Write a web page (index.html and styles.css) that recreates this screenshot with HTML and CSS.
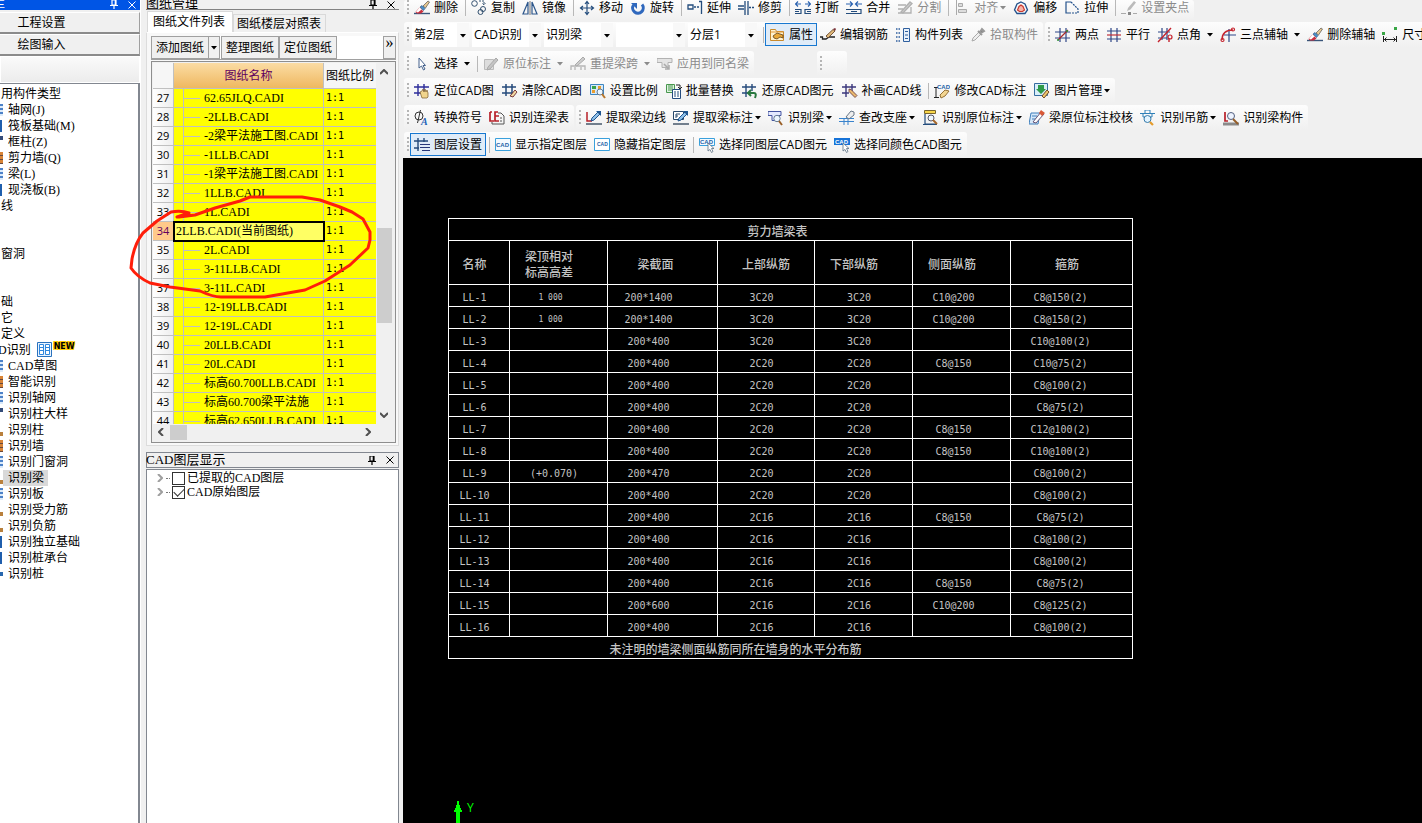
FILE: index.html
```html
<!DOCTYPE html>
<html lang="zh-CN">
<head>
<meta charset="utf-8">
<title>图纸管理</title>
<link rel="stylesheet" href="styles.css">
</head>
<body>
<svg class="defs" aria-hidden="true">
<defs>
<symbol id="arrow" viewBox="0 0 6 4"><path d="M0 0h6L3 3.5z" fill="currentColor"/></symbol>
<symbol id="brush" viewBox="0 0 16 16"><path d="M0 13.5h16" stroke="#39557a" stroke-width="1.4"/><path d="M9 6l5-5 1.5 1-4 6z" fill="#e8c890" stroke="#555" stroke-width=".7"/><path d="M6 7l2-1.500 3 3-1.500 2z" fill="#4a90c8" stroke="#274a78" stroke-width=".6"/><path d="M5.500 7.500l4 4-2.500 2H3L1.500 12z" fill="#c9303e"/><path d="M5.500 7.500l2 2-3.500 3-2-.8z" fill="#fff"/></symbol>
<symbol id="copy" viewBox="0 0 16 16" fill="none" stroke="#33506f"><circle cx="3.500" cy="3.500" r="2.800"/><circle cx="12" cy="9" r="2.500"/><circle cx="9.500" cy="12" r="2.500"/><path d="M8 1h5v4m-1.500-1.500L13 5l1.500-1.500" stroke-dasharray="2 1"/></symbol>
<symbol id="mirror" viewBox="0 0 16 16" fill="none" stroke="#2d578c" stroke-width="1.200"><path d="M6 2v12H1zM10 2v12h5z"/><path d="M8 1v14" stroke="#555" stroke-width=".8"/></symbol>
<symbol id="move" viewBox="0 0 16 16" fill="none" stroke="#244d7d" stroke-width="1.200"><path d="M8 2v12M2 8h12M6 4l2-2.500L10 4M6 12l2 2.500L10 12M4 6L1.500 8 4 10M12 6l2.500 2L12 10"/></symbol>
<symbol id="rotate" viewBox="0 0 16 16"><path d="M12 4.500a5.300 5.300 0 1 1-8.500.5" fill="none" stroke="#2f68bd" stroke-width="3"/><path d="M1 3h6v6z" fill="#2f68bd"/></symbol>
<symbol id="extend" viewBox="0 0 16 16" fill="none" stroke="#244d7d" stroke-width="1.300"><path d="M1 5h5v4H1zM14.500 1v13M12 1.500h3" /><path d="M7 7h6" stroke-dasharray="2 1"/></symbol>
<symbol id="trim" viewBox="0 0 16 16" fill="none" stroke="#244d7d" stroke-width="1.300"><path d="M7 1v14M10 1v14M0 6h6M0 9h6"/><path d="M11 7.500h5" stroke-dasharray="2 1"/></symbol>
<symbol id="break" viewBox="0 0 16 16" fill="none" stroke="#244d7d" stroke-width="1.200"><path d="M0 4h6M3 1.500L.5 4 3 6.500M10 4h6M13 1.500L15.500 4 13 6.500" stroke="#2b62b0"/><path d="M0 9.500h6v4H0M16 9.500h-6v4h6M0 11.500h4M12 11.500h4"/></symbol>
<symbol id="join" viewBox="0 0 16 16" fill="none" stroke="#244d7d" stroke-width="1.200"><path d="M0 4h6M4 1.500L6.500 4 4 6.500M10 4h6M12 1.500L9.500 4 12 6.500" stroke="#2b62b0"/><path d="M0 9.500h15v4H0M5 11.500h6"/></symbol>
<symbol id="split" viewBox="0 0 16 16" fill="none" stroke="#b0b0b0" stroke-width="1.300"><path d="M1 5h8M1 13h13V7M1 9h5"/><path d="M4 12L13 2l2 1.500L6 13z" fill="#ccc"/></symbol>
<symbol id="align" viewBox="0 0 16 16" fill="#ddd" stroke="#aaa"><path d="M2.500 0v15M4.500 3.500h4v3h-4zM4.500 9.500h8v3h-8z"/></symbol>
<symbol id="offset" viewBox="0 0 16 16" fill="none"><path d="M8 2l4 2 2.500 6L12 13.500H4L1.500 10 4 4z" stroke="#24528c" stroke-width="1.300"/><path d="M8 5l2 1.500 1.500 3.500-2 1.500h-3l-2-1.500L6 6.500z" fill="#f6b3a8" stroke="#cc3a30" stroke-width="1.200"/></symbol>
<symbol id="stretch" viewBox="0 0 16 16" fill="none" stroke="#24528c" stroke-width="1.200"><path d="M7 2H2v11h5"/><path d="M7 2l4 4M8 13h6V9l-3-3" stroke-dasharray="2 1"/></symbol>
<symbol id="grippt" viewBox="0 0 16 16"><path d="M0 13.500h5M12 13.500h4" stroke="#aaa"/><path d="M7 8l6-7 2 1.500-5.500 7L6 11z" fill="#bbb"/><path d="M7 12h3v3H7z" fill="#888"/></symbol>
<symbol id="props" viewBox="0 0 16 16"><path d="M1.500 2.500h5l1 2h7v9h-13z" fill="#fff3cf" stroke="#c98a2c"/><path d="M2 5h12" stroke="#e1993a"/><path d="M4 9l4-3 6 2v3l-3-1-3 2-3-1z" fill="#e9a938" stroke="#604015" stroke-width=".8"/></symbol>
<symbol id="rebar" viewBox="0 0 16 16"><path d="M0 10h2.500v2H6l3-2h6" fill="none" stroke="#222" stroke-width="1.300"/><path d="M6 9l7-6.500L15 4 8 11z" fill="#e1b97a" stroke="#5a3a20" stroke-width=".8"/><path d="M13 2l2 2 1-2-1-1z" fill="#7a3038"/></symbol>
<symbol id="list" viewBox="0 0 16 16"><path d="M1 2h5M1 6h5M1 10h5M1 14h5" stroke="#2f5f9e" stroke-width="1.500" stroke-dasharray="1.500 1"/><path d="M8.500 1.500h6v13h-6z" fill="#e9f1fa" stroke="#2f5f9e"/><path d="M10 4.500h3M10 8h3M10 11.500h3" stroke="#2f5f9e"/></symbol>
<symbol id="pick" viewBox="0 0 16 16"><path d="M2 14l1-3 6-6 2 2-6 6z" fill="#eee" stroke="#aaa"/><path d="M8 4l4 4M10 5l2-3 2 2-3 2z" stroke="#999" stroke-width="2"/></symbol>
<symbol id="twopt" viewBox="0 0 16 16" fill="none" stroke="#2f4787" stroke-width="1.200"><path d="M5 1v14M11 1v14M0 5h15M0 11h15"/><path d="M3 13L13 3" stroke="#a52a2a"/><circle cx="3" cy="13" r="1" fill="#2c9437" stroke="none"/><circle cx="12" cy="4" r="1" fill="#2c9437" stroke="none"/></symbol>
<symbol id="par" viewBox="0 0 16 16" fill="none" stroke="#2f4787" stroke-width="1.200"><path d="M5 1v14M11 1v14M1 4h14M1 12h14"/><path d="M1 8h14" stroke="#c22e38"/></symbol>
<symbol id="ptang" viewBox="0 0 16 16" fill="none" stroke="#2f4787" stroke-width="1.200"><path d="M5 1v12M10 1v12M1 5h12M1 11h9"/><path d="M1 15L14 1M12 15v-4" stroke="#c5222d" stroke-width="1.400"/><circle cx="13" cy="10" r="2" stroke="#c5222d"/></symbol>
<symbol id="threept" viewBox="0 0 16 16" fill="none" stroke="#2f4787" stroke-width="1.200"><path d="M9 2v13M4 8h12"/><path d="M2 13C2 6 6 3 13 3" stroke="#c5222d" stroke-width="1.500"/><circle cx="2.500" cy="13" r="1.500" stroke="#c5222d"/><circle cx="13" cy="2.500" r="1.500" stroke="#c5222d"/></symbol>
<symbol id="dim" viewBox="0 0 16 16" fill="none" stroke="#222"><path d="M1.500 9v6M14.500 9v6M2 12.500h12M4.500 10.500l-2 2 2 2M11.500 10.500l2 2-2 2"/><path d="M0 5h3v3H0zM12 0h3v3h-3z" fill="#39a645" stroke="none"/></symbol>
<symbol id="ptr" viewBox="0 0 16 16"><path d="M5 2v10l2.500-2 2 4 1.500-1-2-3.500h2.500z" fill="#fff" stroke="#44618c"/></symbol>
<symbol id="graynote" viewBox="0 0 16 16"><path d="M1.500 3.500h9v10h-9z" fill="#ddd" stroke="#bbb"/><path d="M5 11l8-9 2 2-8 9-3 1z" fill="#c4c4c4" stroke="#aaa"/></symbol>
<symbol id="grayspan" viewBox="0 0 16 16"><path d="M1 14v-4h14v4M5 14v-3M11 14v-3" fill="none" stroke="#b5b5b5" stroke-width="1.300"/><path d="M5 9l8-8 2 2-8 7z" fill="#ccc" stroke="#aaa"/></symbol>
<symbol id="grayapply" viewBox="0 0 16 16"><path d="M0 2.500h15v4H11v5H5v-5H0z" fill="#e4e4e4" stroke="#b2b2b2"/><path d="M7 8l5 5M12 9v4H8" stroke="#aaa" stroke-width="1.500" fill="none"/></symbol>
<symbol id="cadloc" viewBox="0 0 16 16" fill="none" stroke="#2d2d9a" stroke-width="1.400"><path d="M4 1v12M10 1v8M0 4h15M0 10h7"/><path d="M6 9l2-1 1-2 1 3 1-3 1 3 1-2 1 3v4l-1 1H8z" fill="#f0d48c" stroke="#7a5a28" stroke-width=".7"/></symbol>
<symbol id="cadclr" viewBox="0 0 16 16" fill="none" stroke="#254a7b" stroke-width="1.500"><path d="M4 1v12M10 1v12M0 4h14M0 10h12"/><path d="M8 13l5-6 2 2-4 5z" fill="#f1d9a1" stroke="#6b2830" stroke-width=".9"/></symbol>
<symbol id="scale" viewBox="0 0 16 16"><path d="M.5 1.500h13v10H.5z" fill="#d5eafa" stroke="#3d85c0"/><path d="M2 3h4v3H2zM8 7h4v3H8z" fill="#3aa34a"/><path d="M8 3h3v3H8zM2 7h3v3H2z" fill="#ec9d2d"/><circle cx="10" cy="9" r="3" fill="#edf7ff" stroke="#667b92"/><path d="M12 11l3 4" stroke="#b8772c" stroke-width="2"/></symbol>
<symbol id="batch" viewBox="0 0 16 16"><path d="M.5 1.500h8v8h-8z" fill="#dff3e0" stroke="#48974e"/><path d="M2 3h5M2 5h5M2 7h5" stroke="#48974e"/><path d="M6.500 6.500h8v9h-8z" fill="#fff" stroke="#254c7e"/><path d="M9 8v6M12 8v6" stroke="#254c7e"/><path d="M10 2h4v3m-2-1l2 2 2-2" fill="none" stroke="#222"/></symbol>
<symbol id="restore" viewBox="0 0 16 16" fill="none" stroke="#254a7b" stroke-width="1.400"><path d="M4 1v13M10 1v7M0 4h14M0 10h7"/><path d="M7 10h5q3 0 1 5M9 7l-3 3 3 3" stroke="#28783e" stroke-width="2"/></symbol>
<symbol id="fill" viewBox="0 0 16 16" fill="none" stroke="#3b377c" stroke-width="1.400"><path d="M4 1v13M10 1v7M0 4h14M0 10h7"/><path d="M7 6l2 .5 6 6-2 2-6-6z" fill="#e9b96d" stroke="#613039" stroke-width=".8"/></symbol>
<symbol id="edit" viewBox="0 0 16 16"><path d="M0 4.500h4M2 4.500v10M0 14.500h5" stroke="#222" fill="none"/><text x="3" y="6" class="cadtext">CAD</text><path d="M6 12l5-5 4 1-4 5-4 2z" fill="#f3d692" stroke="#957137"/></symbol>
<symbol id="pic" viewBox="0 0 16 16"><path d="M.5.500h13v12H.5z" fill="#d8eef9" stroke="#356c9f"/><path d="M4 2v4H2l5 5 5-5h-2V2z" fill="#2d9a4a"/><path d="M8 13l5-6 2 2-5 6z" fill="#efc56c" stroke="#765027"/></symbol>
<symbol id="phi" viewBox="0 0 16 16"><ellipse cx="5" cy="6" rx="4" ry="4" fill="none" stroke="#333"/><path d="M6.500 0L3.500 13" stroke="#333"/><text x="7" y="15" class="atext">A</text></symbol>
<symbol id="letable" viewBox="0 0 16 16"><path d="M1 2v9h4M1 2h2M9 2H6v9h4M6 6h4" stroke="#b82029" stroke-width="1.700" fill="none"/><path d="M9 3h3l3 3v8H3v-2" fill="none" stroke="#555"/><path d="M11 8h2M11 11h2" stroke="#555"/></symbol>
<symbol id="edge" viewBox="0 0 16 16"><path d="M1 2v9h5" stroke="#b82029" stroke-width="1.500" fill="none"/><path d="M5 11l1-3 6-6 2 2-6 6z" fill="#8fc0e8" stroke="#1f5590"/><path d="M10 1h5v5z" fill="#1f5590"/><path d="M0 14h16" stroke="#46576a" stroke-width="1.500"/></symbol>
<symbol id="note" viewBox="0 0 16 16"><path d="M.5 1.500h10v8H.5z" fill="#fff" stroke="#27496d"/><path d="M3 8V4h4M3 6h2" stroke="#27496d" fill="none"/><path d="M5 11l1-3 6-6 2 2-6 6z" fill="#8fc0e8" stroke="#1f5590"/><path d="M10 1h5v5z" fill="#1f5590"/><path d="M0 14h16" stroke="#46576a" stroke-width="1.500"/></symbol>
<symbol id="find" viewBox="0 0 16 16"><path d="M0 1.500h13v4H9v5H4v-5H0z" fill="#e4eaff" stroke="#4454a0"/><circle cx="9" cy="8.500" r="3.200" fill="#edf7ff" stroke="#667b92"/><path d="M11 11l3 4" stroke="#995f28" stroke-width="2"/></symbol>
<symbol id="support" viewBox="0 0 16 16"><path d="M0 8.500h15M0 11.500h15M5 8v7M9 8v7" stroke="#3983cd" fill="none"/><path d="M7 7l5-6 3 1v3l-5 4z" fill="#eee" stroke="#687787"/></symbol>
<symbol id="insitu" viewBox="0 0 16 16"><path d="M2.500.500h11v3h-11z" fill="#f7d64a" stroke="#79652d"/><path d="M3 4v10h12M1 14.500h14" stroke="#244d7d" stroke-width="1.200" fill="none"/><circle cx="9" cy="8" r="3" fill="#edf7ff" stroke="#556"/><path d="M11 10l4 4" stroke="#a6682b" stroke-width="2"/></symbol>
<symbol id="check" viewBox="0 0 16 16"><path d="M2 3h9l-2 11H0z" fill="#d7e9fa" stroke="#3e7ebb"/><path d="M3 6h5M3 9h4" stroke="#3e7ebb"/><path d="M4 12l8-10 3 2-8 9z" fill="#fff" stroke="#657"/><path d="M10 3l2-3 4 3-3 3z" fill="#d95937"/></symbol>
<symbol id="hang" viewBox="0 0 16 16"><path d="M0 3.500h15M3 3v4h9V3M5 3V0h5v3" fill="none" stroke="#2f80b8"/><circle cx="7.500" cy="9" r="3.500" fill="#e3f4ff" stroke="#357aaa"/><path d="M10 12l3 3" stroke="#e59c2c" stroke-width="2.200"/></symbol>
<symbol id="member" viewBox="0 0 16 16"><path d="M2 2v9h3" stroke="#b82029" stroke-width="1.700" fill="none"/><path d="M0 12.500h16v3H0z" fill="#8a8a8a"/><circle cx="8" cy="6" r="3.500" fill="#edf3ff" stroke="#526080"/><path d="M10 9l5 5" stroke="#955e29" stroke-width="2"/></symbol>
<symbol id="layers" viewBox="0 0 16 16" fill="none" stroke="#254a7b" stroke-width="1.400"><path d="M4 1v13M10 1v4M0 4h14M0 11h5"/><path d="M6 7.500h10M6 10.500h10M8 13.500h8" stroke="#27387a" stroke-width="1.200"/></symbol>
<symbol id="cad" viewBox="0 0 16 16"><path d="M.5 1.500h15v12H.5z" fill="#f4faff" stroke="#3aa0dc"/><text x="1" y="10" class="cadtext">CAD</text></symbol>
<symbol id="cadhide" viewBox="0 0 16 16"><path d="M.5 1.500h15v12H.5z" fill="#fff" stroke="#3aa0dc"/><text x="3" y="9" class="cadsmall">CAD</text></symbol>
<symbol id="cadsel" viewBox="0 0 16 16"><path d="M.5 1.500h15v7H.5z" fill="#f4faff" stroke="#3aa0dc"/><text x="1" y="7" class="cadtext">CAD</text><path d="M9 6v8l2-1.500 1.500 3 1.500-1-1.500-3H15z" fill="#fff" stroke="#5e7184" stroke-width=".8"/></symbol>
<symbol id="cadcol" viewBox="0 0 16 16"><path d="M0 1h16v7H0z" fill="#1673d8"/><text x="1" y="7" class="cadwhite">CAD</text><path d="M9 6v8l2-1.500 1.500 3 1.500-1-1.500-3H15z" fill="#fff" stroke="#5e7184" stroke-width=".8"/></symbol>
<symbol id="pin" viewBox="0 0 8 9"><path d="M2 0h4v5H2zM0 5.500h8M4 6v3M5.300 0v5" fill="none" stroke="currentColor" stroke-width="1.200"/></symbol>
<symbol id="close" viewBox="0 0 8 8"><path d="M.5.500l7 7M7.500.500l-7 7" fill="none" stroke="currentColor"/></symbol>
<symbol id="chev" viewBox="0 0 8 6"><path d="M0 5l4-4 4 4" fill="none" stroke="#505050" stroke-width="2"/></symbol>
</defs>
</svg>

<div class="app">
<aside class="nav">
  <div class="nav-title"><span>栏</span><svg class="pin"><use href="#pin"/></svg><svg class="x"><use href="#close"/></svg></div>
  <div class="nav-buttons"><button>工程设置</button><button>绘图输入</button></div>
  <div class="nav-strip"></div>
  <ul class="tree">
    <li class="top">用构件类型</li>
    <li><i class="c1"></i>轴网(J)</li>
    <li><i class="c2"></i>筏板基础(M)</li>
    <li><i class="c3"></i>框柱(Z)</li>
    <li><i class="c4"></i>剪力墙(Q)</li>
    <li><i class="c1"></i>梁(L)</li>
    <li><i class="c2"></i>现浇板(B)</li>
    <li class="top">线</li><li></li><li></li>
    <li class="top">窗洞</li><li></li><li></li>
    <li class="top">础</li>
    <li class="top">它</li>
    <li class="top">定义</li>
    <li class="cut"><span>D识别</span><svg class="book" viewBox="0 0 16 16"><path d="M.5.500h14v14H.5z" fill="#eaf4ff" stroke="#2a72bd"/><path d="M2.500 2.500h4v10h-4zM8.500 2.500h4v10h-4z" fill="#fff" stroke="#2f87dd"/><path d="M3 5.500h3M3 8.500h3M9 5.500h3M9 8.500h3" stroke="#2f87dd"/></svg><b>NEW</b></li>
    <li><i class="c1"></i>CAD草图</li>
    <li><i class="c4"></i>智能识别</li>
    <li><i class="c1"></i>识别轴网</li>
    <li><i class="c3"></i>识别柱大样</li>
    <li><i class="c5"></i>识别柱</li>
    <li><i class="c4"></i>识别墙</li>
    <li><i class="c1"></i>识别门窗洞</li>
    <li><i class="c5"></i><span class="sel">识别梁</span></li>
    <li><i class="c1"></i>识别板</li>
    <li><i class="c5"></i>识别受力筋</li>
    <li><i class="c5"></i>识别负筋</li>
    <li><i class="c2"></i>识别独立基础</li>
    <li><i class="c2"></i>识别桩承台</li>
    <li><i class="c6"></i>识别桩</li>
  </ul>
</aside>

<section class="docks">
  <header class="dock-title first"><span>图纸管理</span><svg class="pin"><use href="#pin"/></svg><svg class="x"><use href="#close"/></svg></header>
  <div class="tabs"><button class="tab on">图纸文件列表</button><button class="tab">图纸楼层对照表</button></div>
  <div class="page">
    <div class="sheet-tools"><button>添加图纸</button><button class="drop" aria-label="更多"><svg class="arr"><use href="#arrow"/></svg></button><button>整理图纸</button><button>定位图纸</button><button class="more">»</button></div>
    <div class="grid-box">
      <div class="grid-view">
        <table class="sheets">
          <thead><tr><th class="num"></th><th class="name">图纸名称</th><th class="ratio">图纸比例</th></tr></thead>
          <tbody>
          <tr><th>27</th><td>62.65JLQ.CADI</td><td>1:1</td></tr>
          <tr><th>28</th><td>-2LLB.CADI</td><td>1:1</td></tr>
          <tr><th>29</th><td>-2梁平法施工图.CADI</td><td>1:1</td></tr>
          <tr><th>30</th><td>-1LLB.CADI</td><td>1:1</td></tr>
          <tr><th>31</th><td>-1梁平法施工图.CADI</td><td>1:1</td></tr>
          <tr><th>32</th><td>1LLB.CADI</td><td>1:1</td></tr>
          <tr><th>33</th><td>1L.CADI</td><td>1:1</td></tr>
          <tr class="current"><th>34</th><td>2LLB.CADI(当前图纸)</td><td>1:1</td></tr>
          <tr><th>35</th><td>2L.CADI</td><td>1:1</td></tr>
          <tr><th>36</th><td>3-11LLB.CADI</td><td>1:1</td></tr>
          <tr><th>37</th><td>3-11L.CADI</td><td>1:1</td></tr>
          <tr><th>38</th><td>12-19LLB.CADI</td><td>1:1</td></tr>
          <tr><th>39</th><td>12-19L.CADI</td><td>1:1</td></tr>
          <tr><th>40</th><td>20LLB.CADI</td><td>1:1</td></tr>
          <tr><th>41</th><td>20L.CADI</td><td>1:1</td></tr>
          <tr><th>42</th><td>标高60.700LLB.CADI</td><td>1:1</td></tr>
          <tr><th>43</th><td>标高60.700梁平法施</td><td>1:1</td></tr>
          <tr><th>44</th><td>标高62.650LLB.CADI</td><td>1:1</td></tr>
          </tbody>
        </table>
        <div class="vbar"><svg class="chev"><use href="#chev"/></svg><span class="vthumb"></span><svg class="chev down"><use href="#chev"/></svg></div>
      </div>
      <div class="hbar"><svg class="chev left"><use href="#chev"/></svg><span class="hthumb"></span><svg class="chev right"><use href="#chev"/></svg></div>
    </div>
  </div>
  <header class="dock-title second"><span>CAD图层显示</span><svg class="pin"><use href="#pin"/></svg><svg class="x"><use href="#close"/></svg></header>
  <div class="layer-tree">
    <div class="layer"><svg class="chev right pale"><use href="#chev"/></svg><i></i><input type="checkbox" id="l1"><label for="l1">已提取的CAD图层</label></div>
    <div class="layer"><svg class="chev right pale"><use href="#chev"/></svg><i></i><input type="checkbox" id="l2" checked><label for="l2">CAD原始图层</label></div>
  </div>
</section>

<main class="work">
  <div class="bars">
    <div class="row r1"><div class="bar"><span class="grip"></span>
      <button><svg><use href="#brush"/></svg>删除</button><hr>
      <button><svg><use href="#copy"/></svg>复制</button><button><svg><use href="#mirror"/></svg>镜像</button><hr>
      <button><svg><use href="#move"/></svg>移动</button><button><svg><use href="#rotate"/></svg>旋转</button><hr>
      <button><svg><use href="#extend"/></svg>延伸</button><button><svg><use href="#trim"/></svg>修剪</button><hr>
      <button><svg><use href="#break"/></svg>打断</button><button><svg><use href="#join"/></svg>合并</button><button disabled><svg><use href="#split"/></svg>分割</button><hr>
      <button disabled><svg><use href="#align"/></svg>对齐<svg class="arr"><use href="#arrow"/></svg></button><button><svg><use href="#offset"/></svg>偏移</button><button><svg><use href="#stretch"/></svg>拉伸</button><hr>
      <button disabled><svg><use href="#grippt"/></svg>设置夹点</button></div></div>
    <div class="row r2"><div class="bar"><span class="grip"></span>
      <span class="combo short"><select aria-label="楼层"><option>第2层</option></select><svg class="arr"><use href="#arrow"/></svg></span>
      <span class="combo"><select aria-label="模块"><option>CAD识别</option></select><svg class="arr"><use href="#arrow"/></svg></span>
      <span class="combo"><select aria-label="构件类型"><option>识别梁</option></select><svg class="arr"><use href="#arrow"/></svg></span>
      <span class="combo"><select aria-label="构件"><option></option></select><svg class="arr"><use href="#arrow"/></svg></span>
      <span class="combo"><select aria-label="分层"><option>分层1</option></select><svg class="arr"><use href="#arrow"/></svg></span><hr>
      <button class="on"><svg><use href="#props"/></svg>属性</button><button><svg><use href="#rebar"/></svg>编辑钢筋</button><button><svg><use href="#list"/></svg>构件列表</button><button disabled><svg><use href="#pick"/></svg>拾取构件</button></div>
      <div class="bar grow"><span class="grip"></span>
      <button><svg><use href="#twopt"/></svg>两点</button><button><svg><use href="#par"/></svg>平行</button><button class="wide"><svg><use href="#ptang"/></svg>点角<svg class="arr"><use href="#arrow"/></svg></button><button class="wide"><svg><use href="#threept"/></svg>三点辅轴<svg class="arr"><use href="#arrow"/></svg></button><button><svg><use href="#brush"/></svg>删除辅轴</button><button><svg><use href="#dim"/></svg>尺寸</button></div></div>
    <div class="row r3"><div class="bar"><span class="grip"></span>
      <button class="wide"><svg><use href="#ptr"/></svg>选择<svg class="arr"><use href="#arrow"/></svg></button><hr>
      <button disabled class="wide"><svg><use href="#graynote"/></svg>原位标注<svg class="arr"><use href="#arrow"/></svg></button><button disabled class="wide"><svg><use href="#grayspan"/></svg>重提梁跨<svg class="arr"><use href="#arrow"/></svg></button><button disabled><svg><use href="#grayapply"/></svg>应用到同名梁</button></div>
      <div class="bar stub"><span class="grip"></span></div></div>
    <div class="row r4"><div class="bar"><span class="grip"></span>
      <button><svg><use href="#cadloc"/></svg>定位CAD图</button><button><svg><use href="#cadclr"/></svg>清除CAD图</button><button><svg><use href="#scale"/></svg>设置比例</button><button><svg><use href="#batch"/></svg>批量替换</button><button><svg><use href="#restore"/></svg>还原CAD图元</button><button><svg><use href="#fill"/></svg>补画CAD线</button><hr>
      <button><svg><use href="#edit"/></svg>修改CAD标注</button><button><svg><use href="#pic"/></svg>图片管理<svg class="arr"><use href="#arrow"/></svg></button></div></div>
    <div class="row"><div class="bar"><span class="grip"></span>
      <button><svg><use href="#phi"/></svg>转换符号</button><button><svg><use href="#letable"/></svg>识别连梁表</button></div>
      <div class="bar"><span class="grip"></span>
      <button><svg><use href="#edge"/></svg>提取梁边线</button><button><svg><use href="#note"/></svg>提取梁标注<svg class="arr"><use href="#arrow"/></svg></button><button><svg><use href="#find"/></svg>识别梁<svg class="arr"><use href="#arrow"/></svg></button><button><svg><use href="#support"/></svg>查改支座<svg class="arr"><use href="#arrow"/></svg></button><button><svg><use href="#insitu"/></svg>识别原位标注<svg class="arr"><use href="#arrow"/></svg></button><button><svg><use href="#check"/></svg>梁原位标注校核</button><button><svg><use href="#hang"/></svg>识别吊筋<svg class="arr"><use href="#arrow"/></svg></button><button><svg><use href="#member"/></svg>识别梁构件</button></div></div>
    <div class="row r6"><div class="bar"><span class="grip"></span>
      <button class="on"><svg><use href="#layers"/></svg>图层设置</button><hr>
      <button><svg><use href="#cad"/></svg>显示指定图层</button><button><svg><use href="#cadhide"/></svg>隐藏指定图层</button><hr>
      <button><svg><use href="#cadsel"/></svg>选择同图层CAD图元</button><button><svg><use href="#cadcol"/></svg>选择同颜色CAD图元</button></div></div>
  </div>
  <div class="canvas">
    <table class="beams">
      <colgroup><col class="w1"><col class="w2"><col class="w3"><col class="w4"><col class="w5"><col class="w5"><col class="w7"></colgroup>
      <thead>
      <tr><th colspan="7" class="cap">剪力墙梁表</th></tr>
      <tr class="heads"><th>名称</th><th>梁顶相对<br>标高高差</th><th>梁截面</th><th>上部纵筋</th><th>下部纵筋</th><th>侧面纵筋</th><th>箍筋</th></tr>
      </thead>
      <tbody>
      <tr><td>LL-1</td><td class="sm">1 000</td><td>200*1400</td><td>3C20</td><td>3C20</td><td>C10@200</td><td>C8@150(2)</td></tr>
      <tr><td>LL-2</td><td class="sm">1 000</td><td>200*1400</td><td>3C20</td><td>3C20</td><td>C10@200</td><td>C8@150(2)</td></tr>
      <tr><td>LL-3</td><td></td><td>200*400</td><td>3C20</td><td>3C20</td><td></td><td>C10@100(2)</td></tr>
      <tr><td>LL-4</td><td></td><td>200*400</td><td>2C20</td><td>2C20</td><td>C8@150</td><td>C10@75(2)</td></tr>
      <tr><td>LL-5</td><td></td><td>200*400</td><td>2C20</td><td>2C20</td><td></td><td>C8@100(2)</td></tr>
      <tr><td>LL-6</td><td></td><td>200*400</td><td>2C20</td><td>2C20</td><td></td><td>C8@75(2)</td></tr>
      <tr><td>LL-7</td><td></td><td>200*400</td><td>2C20</td><td>2C20</td><td>C8@150</td><td>C12@100(2)</td></tr>
      <tr><td>LL-8</td><td></td><td>200*400</td><td>2C20</td><td>2C20</td><td>C8@150</td><td>C10@100(2)</td></tr>
      <tr><td>LL-9</td><td>(+0.070)</td><td>200*470</td><td>2C20</td><td>2C20</td><td></td><td>C8@100(2)</td></tr>
      <tr><td>LL-10</td><td></td><td>200*400</td><td>2C20</td><td>2C20</td><td></td><td>C8@100(2)</td></tr>
      <tr><td>LL-11</td><td></td><td>200*400</td><td>2C16</td><td>2C16</td><td>C8@150</td><td>C8@75(2)</td></tr>
      <tr><td>LL-12</td><td></td><td>200*400</td><td>2C16</td><td>2C16</td><td></td><td>C8@100(2)</td></tr>
      <tr><td>LL-13</td><td></td><td>200*400</td><td>2C16</td><td>2C16</td><td></td><td>C8@100(2)</td></tr>
      <tr><td>LL-14</td><td></td><td>200*400</td><td>2C16</td><td>2C16</td><td>C8@150</td><td>C8@75(2)</td></tr>
      <tr><td>LL-15</td><td></td><td>200*600</td><td>2C16</td><td>2C16</td><td>C10@200</td><td>C8@125(2)</td></tr>
      <tr><td>LL-16</td><td></td><td>200*400</td><td>2C16</td><td>2C16</td><td></td><td>C8@100(2)</td></tr>
      </tbody>
      <tfoot><tr><th colspan="7" class="foot">未注明的墙梁侧面纵筋同所在墙身的水平分布筋</th></tr></tfoot>
    </table>
    <div class="axis"><svg viewBox="0 0 8 22"><path d="M3 0h2v4h1v3h1v2h1v2H6v11H2V11H0V9h1V7h1V4h1z" fill="#0f0"/></svg><span>Y</span></div>
  </div>
</main>

<svg class="markup" viewBox="0 0 244 106"><path d="M48 22L60 18Q52 15 42 17L28 26L14 38Q6 48 3 64L2 73Q8 82 21 88L41 92L71 96Q84 102 92 102H136L176 95L196 86L221 70L239 53L241 45V37L234 24L223 17L211 12L191 5L173 2H121L111 6L86 13L66 20L50 22" fill="none" stroke="#ff1e0a" stroke-width="3" stroke-linejoin="round" stroke-linecap="round"/></svg>
</div>
</body>
</html>
```
FILE: styles.css
```css
* { box-sizing: border-box; }
body { margin: 0; background: #f0f0f0; color: #000; font: 12px/16px "Open Sans", "Noto Sans CJK SC", sans-serif; }
button, select, input { font: inherit; color: inherit; }
button { border: 0; background: none; padding: 0; white-space: nowrap; }
.defs { position: absolute; width: 0; height: 0; }
.app { position: relative; display: flex; height: 100vh; overflow: hidden; }
.nav, .docks { font-family: "Liberation Serif", "Noto Sans CJK SC", serif; }
.cadtext, .cadsmall, .cadwhite { font: bold 6px "Liberation Sans", sans-serif; fill: #1e5fa8; }
.cadsmall { font-size: 5px; }
.cadwhite { fill: #fff; }
.atext { font: bold italic 10px "Liberation Serif", serif; fill: #1e62b8; }
.pin { width: 8px; height: 9px; }
.x { width: 8px; height: 8px; }
.arr { width: 6px; height: 4px; }
.chev { width: 8px; height: 6px; }
.down { transform: rotate(180deg); }
.left { transform: rotate(-90deg); }
.right { transform: rotate(90deg); }
.pale { opacity: .55; }

/* navigator */
.nav { flex: 0 0 141px; display: flex; flex-direction: column; border-right: 1px solid #fff; }
.nav-title { display: flex; align-items: flex-end; height: 10px; padding: 0 4px 1px 0; gap: 10px; background: #0055e5; color: #fff; overflow: hidden; }
.nav-title span { flex: 1; margin-left: -7px; line-height: 10px; }
.nav-buttons { display: grid; gap: 0; padding-top: 2px; }
.nav-buttons button { height: 22px; padding: 1px 56px 0 0; background: #f0f0f0; border: 1px solid #a0a0a0; border-left: 0; border-top-color: #fff; border-bottom: 2px solid #8b8b8b; }
.nav-strip { height: 27px; background: linear-gradient(#fafafa, #ececec); border: 1px solid #fff; }
.tree { flex: 1; margin: 0; padding: 2px 0 0; list-style: none; background: #fff; border: solid #828790; border-width: 1px 2px 0 0; overflow: hidden; }
.tree li { display: flex; align-items: center; height: 16px; white-space: nowrap; }
.tree .top { padding-left: 1px; }
.tree i { width: 3px; height: 12px; margin-right: 5px; }
.tree .cut { gap: 6px; }
.tree .cut > span { margin-left: -2px; }
.tree .cut b { margin-left: -5px; padding-bottom: 6px; font: bold 8px/8px "DejaVu Sans", sans-serif; text-shadow: 0 0 1px #fc0, 1px 1px #fc0, -1px -1px #fc0, 1px -1px #fc0, -1px 1px #fc0; }
.book { width: 16px; height: 16px; }
.sel { margin-left: -5px; padding: 0 4px 0 5px; background: #d9d9d9; }
.c1 { background: repeating-linear-gradient(#4d82c8 0 2px, #dcebfa 2px 4px); }
.c2 { background: linear-gradient(90deg, #1f5eac 2px, transparent 2px); }
.c3 { background: linear-gradient(#334b78 4px, transparent 4px); }
.c4 { background: repeating-linear-gradient(#d98435 0 3px, #68483a 3px 4px); }
.c5 { background: linear-gradient(transparent 8px, #b9803c 8px); }
.c6 { background: linear-gradient(transparent 4px, #2867ae 4px 8px, transparent 8px); }

/* docked panels */
.docks { flex: 0 0 259px; display: flex; flex-direction: column; padding: 0 1px 0 5px; }
.dock-title { display: flex; align-items: center; gap: 10px; padding-right: 4px; font-size: 13px; white-space: nowrap; }
.dock-title span { flex: 1; }
.first { height: 10px; border-bottom: 1px solid #828282; overflow: hidden; }
.first span { margin-top: -2px; }
.second { height: 16px; margin-top: 6px; border: 1px solid #828790; }
.second span { margin-left: -1px; }
.tabs { display: flex; align-items: flex-end; height: 22px; padding-left: 1px; }
.tab { height: 18px; padding: 0 4px 0 3px; border: 1px solid #d9d9d9; border-bottom: 0; }
.tab.on { height: 21px; padding: 0 7px 0 5px; background: #fff; }
.page { padding: 3px 2px 2px 4px; border: 1px solid #dcdcdc; border-top-color: #fff; background: #f8f8f8; }
.sheet-tools { display: flex; height: 24px; background: #fff; border-bottom: 1px solid #a0a0a0; }
.sheet-tools button { padding: 0 4px; border: 1px solid #a0a0a0; background: #f0f0f0; }
.sheet-tools .drop { display: flex; align-items: center; width: 12px; padding: 0 2px; margin: 0 1px 0 -1px; }
.sheet-tools .more { width: 13px; margin-left: auto; padding: 0 0 10px; font-size: 16px; line-height: 10px; }
.grid-box { margin-top: 1px; padding: 1px 3px 2px 1px; background: #f0f0f0; border: 1px solid #8e8e8e; }
.grid-view { display: flex; height: 361px; overflow: hidden; }
.sheets { flex: 1; border-collapse: separate; border-spacing: 0; table-layout: fixed; background: #fff; }
.sheets th, .sheets td { height: 19px; padding: 0; line-height: 16px; font-weight: normal; white-space: nowrap; border: solid #c0c0c0; border-width: 0 1px 1px 0; }
.sheets thead th { height: 26px; background: #f6f6f6; overflow: hidden; }
.sheets thead .name { background: linear-gradient(#fbdca4, #efb860); color: #5f005f; }
.sheets .num { width: 21px; }
.sheets .ratio { width: 52px; border-right: 0; }
.sheets tbody th { background: linear-gradient(90deg, #fff, #eee); font-family: "Open Sans", sans-serif; font-size: 11px; }
.sheets td { background: #ff0; }
.sheets td:nth-child(2) { padding-left: 30px; background: linear-gradient(#c0c0c0, #c0c0c0) 9px 0 / 1px 100% no-repeat, linear-gradient(#c0c0c0, #c0c0c0) 9px 9px / 17px 1px no-repeat, #ff0; }
.sheets td:nth-child(3) { padding-left: 2px; border-right: 0; font: 10px/16px "DejaVu Sans Mono", monospace; }
.sheets .current th { background: #ffc98a; color: #5f005f; }
.sheets .current td:nth-child(2) { padding-left: 2px; background: #ffff64; outline: 2px solid #000; outline-offset: -1px; }
.vbar { flex: 0 0 16px; display: flex; flex-direction: column; align-items: center; padding: 6px 0; background: #f0f0f0; }
.vthumb { width: 15px; height: 95px; margin: 153px 0 auto; background: #cdcdcd; }
.hbar { display: flex; align-items: center; height: 16px; padding: 0 20px 0 4px; }
.hthumb { width: 17px; height: 15px; margin: 0 auto 0 5px; background: #cdcdcd; }
.layer-tree { flex: 1; margin-top: 1px; padding: 1px 0 0 9px; background: #fff; border: 1px solid #828790; border-bottom: 0; }
.layer { display: flex; align-items: center; height: 14px; }
.layer i { width: 4px; margin: 0 2px 0 2px; border-top: 1px dotted #777; }
.layer input { appearance: none; width: 13px; height: 13px; margin: 0 2px 0 0; background: #fff; border: 1px solid #333; }
.layer input:checked::after { content: ""; display: block; width: 9px; height: 5px; margin: 1px; border: solid #333; border-width: 0 0 1px 1px; transform: rotate(-45deg); }

/* toolbars */
.work { flex: 1; min-width: 0; display: flex; flex-direction: column; padding-left: 3px; }
.bars { padding-left: 1px; overflow: hidden; }
.row { display: flex; align-items: flex-start; gap: 2px; height: 27px; }
.bar { display: flex; align-items: center; height: 25px; padding: 0 1px 0 3px; border-radius: 3px; background: linear-gradient(#fdfdfd, #f0f0f0); white-space: nowrap; }
.r1 { height: 22px; }
.r1 .bar { height: 20px; padding-bottom: 5px; }
.r2 { height: 29px; }
.r6 { height: 26px; }
.grow { flex: 1; }
.stub { width: 30px; margin-left: 61px; }
.bar button { flex: none; display: flex; align-items: center; gap: 4px; height: 23px; padding: 0 4px 0 3px; }
.bar button > svg { width: 16px; height: 16px; }
.bar button > .arr { width: 6px; height: 4px; margin-left: -2px; }
.bar button.wide > .arr { margin-left: 2px; }
.bar button:disabled { color: #8b8b8b; }
.bar .on { padding: 0 3px; border: 1px solid #1878d0; background: #e0ecf8; }
.bar hr { width: 1px; height: 16px; margin: 0 2px 0 3px; border: 0; background: #b8b8b8; }
.bar hr + .on { margin-left: -1px; }
.grip { flex: none; width: 2px; height: 15px; margin-right: 2px; background: repeating-linear-gradient(#b5b5b5 0 2px, transparent 2px 4px); }
.r4 button { padding-left: 4px; }
.r4 .grip, .r4 hr { margin-right: 1px; }
.r6 .grip { margin-right: 1px; }
.combo { position: relative; width: 69px; margin-right: 3px; background: #fff; }
.short { width: 57px; margin-left: 1px; }
.combo select { appearance: none; width: 100%; height: 24px; padding: 0 2px; border: 0; background: linear-gradient(90deg, #fff, #fff) 0 0 / calc(100% - 12px) 100% no-repeat, #f8f8f8; }
.combo .arr { position: absolute; right: 3px; top: 11px; pointer-events: none; }

/* drawing area */
.canvas { flex: 1; min-height: 0; display: flex; flex-direction: column; justify-content: space-between; align-items: flex-start; padding: 60px 0 0 45px; background: #000; color: #c4c4c4; overflow: hidden; }
.beams { border-collapse: collapse; table-layout: fixed; width: 685px; text-align: center; font: 10px/14px "DejaVu Sans Mono", "Noto Sans CJK SC", monospace; }
.beams td, .beams th { height: 22px; padding: 4px 9px 0 0; border: 1px solid #fff; }
.beams th { font-size: 12px; line-height: 16px; font-weight: 500; }
.beams .heads th { height: 44px; }
.beams .cap { padding-right: 26px; }
.beams .foot { padding-right: 110px; }
.beams td:nth-child(3) { padding-right: 28px; }
.beams th:nth-child(3) { padding-right: 14px; }
.beams td:nth-child(7) { padding-right: 22px; }
.beams td:nth-child(6) { padding-right: 16px; }
.beams th:nth-child(2), .beams th:nth-child(5), .beams th:nth-child(6) { padding-right: 19px; }
.beams th:nth-child(4) { padding-right: 0; }
.beams .sm { padding-right: 16px; font-size: 8px; }
.w1 { width: 61px; } .w2 { width: 98px; } .w3 { width: 110px; } .w4 { width: 97px; } .w5 { width: 98px; } .w7 { width: 122px; }
.axis { display: flex; gap: 5px; padding-left: 6px; color: #0f0; font: 12px/14px "Open Sans", sans-serif; }
.axis svg { width: 8px; height: 22px; }

/* hand-drawn mark over the sheet list */
.markup { position: absolute; left: 129px; top: 195px; width: 244px; height: 106px; pointer-events: none; }
```
